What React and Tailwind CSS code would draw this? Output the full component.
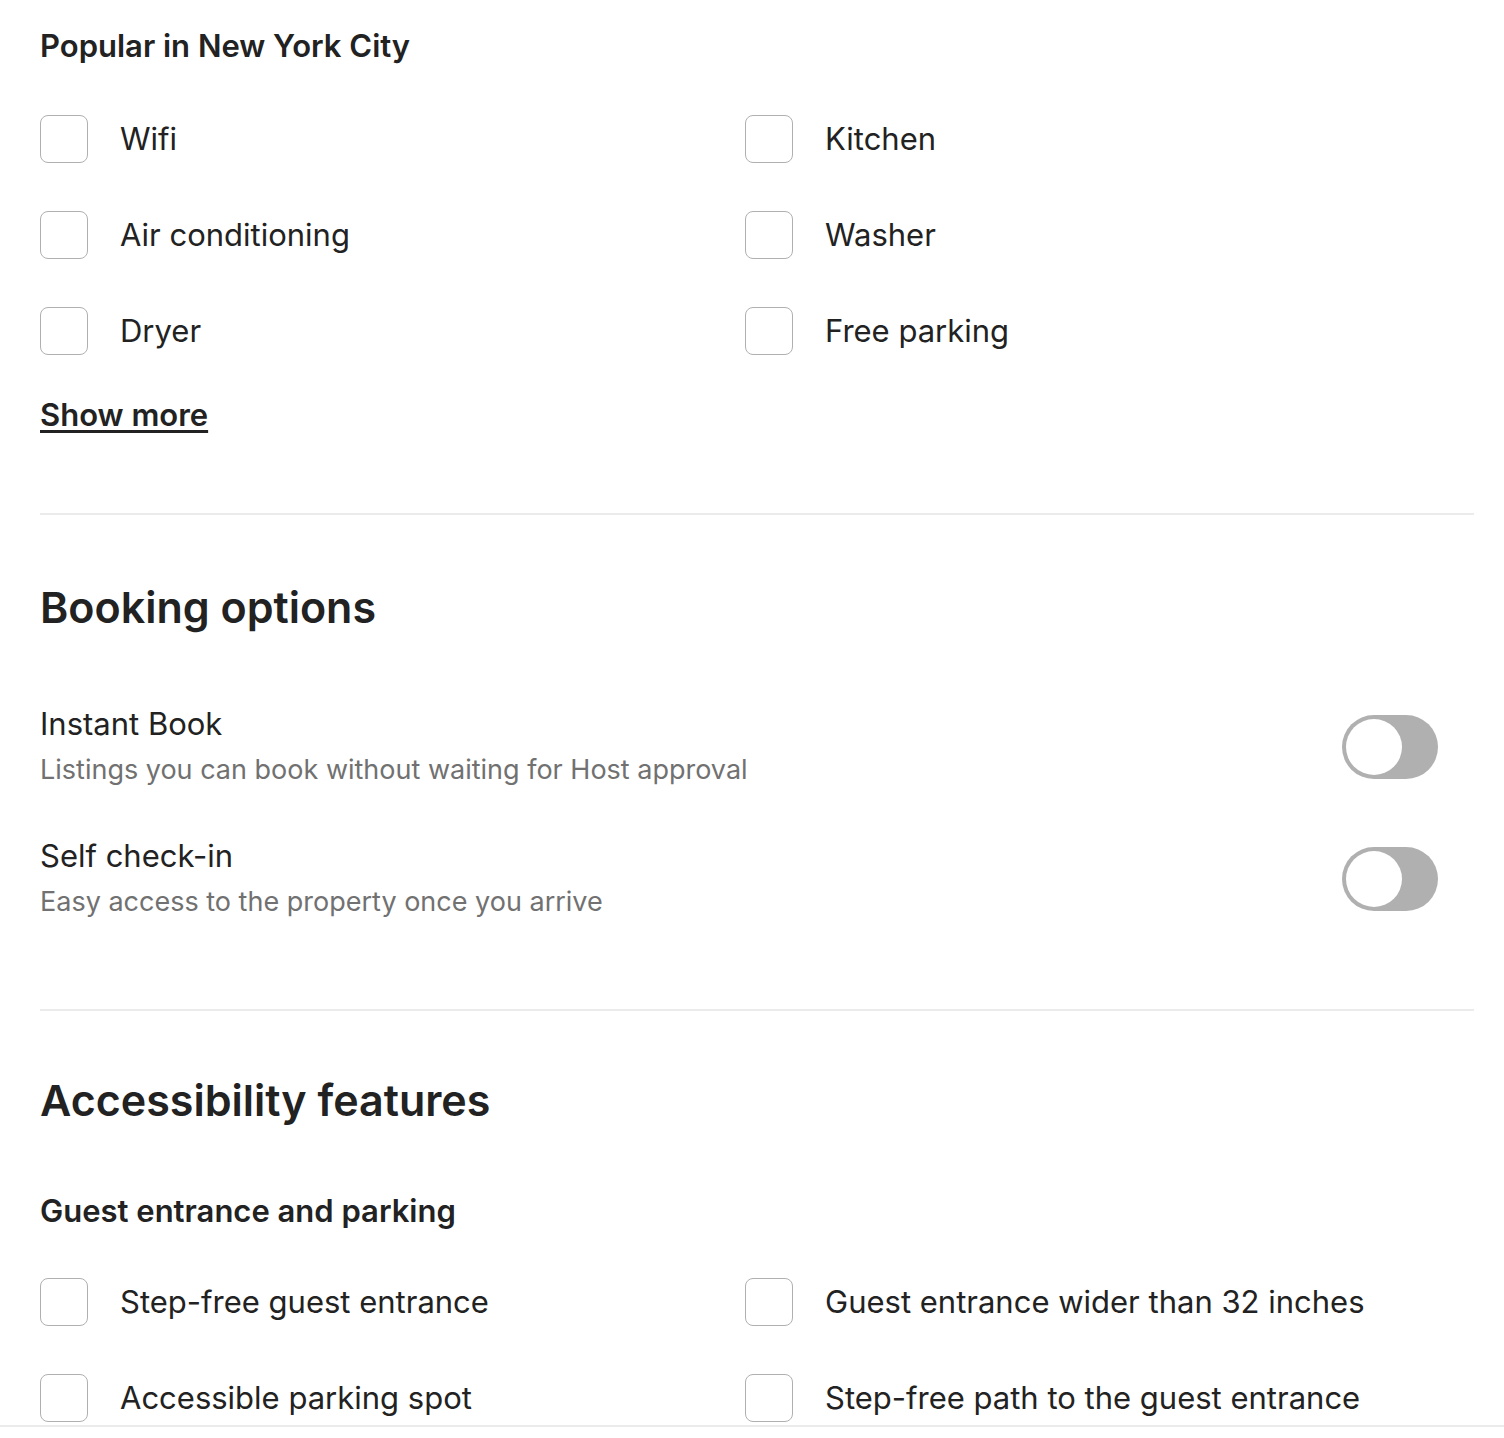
import React, { useState } from "react";

const font = { fontFamily: "Inter, 'Noto Sans', sans-serif" };

function Checkbox({ label }) {
  const [checked, setChecked] = useState(false);
  return (
    <label className="flex items-center h-[48px] cursor-pointer">
      <span
        onClick={() => setChecked(!checked)}
        className={`w-[48px] h-[48px] shrink-0 rounded-[8px] border-[1.5px] ${
          checked ? "bg-[#222222] border-[#222222]" : "border-[#b0b0b0] bg-white"
        }`}
      />
      <span className="pl-[32px] text-[31px] text-[#222222] leading-[40px]">{label}</span>
    </label>
  );
}

function Toggle() {
  const [on, setOn] = useState(false);
  return (
    <button
      onClick={() => setOn(!on)}
      className={`w-[96px] h-[64px] rounded-full p-[4px] flex shrink-0 ${
        on ? "bg-[#222222] justify-end" : "bg-[#b0b0b0] justify-start"
      }`}
    >
      <span className="w-[56px] h-[56px] rounded-full bg-white" />
    </button>
  );
}

function CheckGrid({ items }) {
  return (
    <div className="grid grid-cols-[705px_1fr] gap-y-[48px]">
      {items.map((item) => (
        <Checkbox key={item} label={item} />
      ))}
    </div>
  );
}

function ToggleRow({ title, desc }) {
  return (
    <div className="flex items-center justify-between pr-[36px]">
      <div>
        <div className="text-[31px] leading-[40px] text-[#222222]">{title}</div>
        <div className="text-[27px] leading-[40px] text-[#717171] mt-[6px]">{desc}</div>
      </div>
      <Toggle />
    </div>
  );
}

export default function App() {
  return (
    <div className="bg-white min-h-[1438px] pl-[40px] pr-[30px]" style={font}>
      <div className="pt-[26px]">
        <h3 className="text-[31px] font-semibold leading-[40px] text-[#222222]">
          Popular in New York City
        </h3>
        <div className="mt-[49px]">
          <CheckGrid
            items={["Wifi", "Kitchen", "Air conditioning", "Washer", "Dryer", "Free parking"]}
          />
        </div>
        <button className="mt-[40px] text-[31px] font-semibold leading-[40px] text-[#222222] underline underline-offset-[4px]">
          Show more
        </button>
      </div>

      <div className="mt-[78px] h-[2px] bg-[#ebebeb]" />

      <div>
        <h2 className="mt-[64px] text-[43px] font-semibold leading-[56px] text-[#222222]">
          Booking options
        </h2>
        <div className="mt-[69px] flex flex-col gap-[46px]">
          <ToggleRow
            title="Instant Book"
            desc="Listings you can book without waiting for Host approval"
          />
          <ToggleRow title="Self check-in" desc="Easy access to the property once you arrive" />
        </div>
      </div>

      <div className="mt-[87px] h-[2px] bg-[#ebebeb]" />

      <div>
        <h2 className="mt-[61px] text-[43px] font-semibold leading-[56px] text-[#222222]">
          Accessibility features
        </h2>
        <h3 className="mt-[63px] text-[31px] font-semibold leading-[40px] text-[#222222]">
          Guest entrance and parking
        </h3>
        <div className="mt-[47px]">
          <CheckGrid
            items={[
              "Step-free guest entrance",
              "Guest entrance wider than 32 inches",
              "Accessible parking spot",
              "Step-free path to the guest entrance",
            ]}
          />
        </div>
      </div>
      <div className="mt-[3px] -mr-[30px] -ml-[40px] h-[2px] bg-[#ebebeb]" />
    </div>
  );
}
